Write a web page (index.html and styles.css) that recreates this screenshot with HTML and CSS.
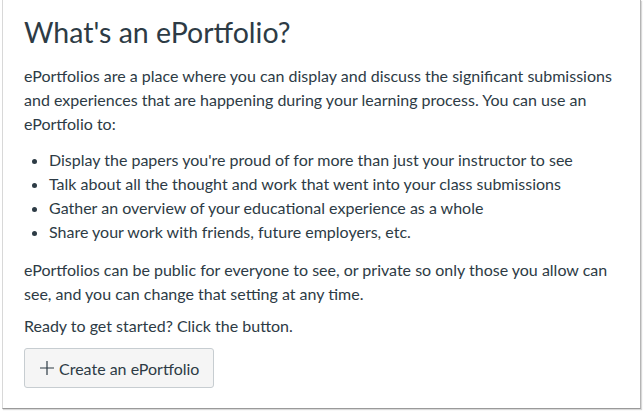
FILE: index.html
```html
<!DOCTYPE html>
<html lang="en">
<head>
    <meta charset="UTF-8">
    <title>ePortfolios</title>
    <link rel="stylesheet" href="styles.css">
</head>
<body>
    <div class="window">
        <h1>What's an ePortfolio?</h1>

        <p>ePortfolios are a place where you can display and discuss the significant submissions and experiences that are happening during your learning process. You can use an ePortfolio to:</p>

        <ul class="uses">
            <li>Display the papers you're proud of for more than just your instructor to see</li>
            <li>Talk about all the thought and work that went into your class submissions</li>
            <li>Gather an overview of your educational experience as a whole</li>
            <li>Share your work with friends, future employers, etc.</li>
        </ul>

        <p class="privacy">ePortfolios can be public for everyone to see, or private so only those you allow can see, and you can change that setting at any time.</p>

        <p class="ready">Ready to get started? Click the button.</p>

        <button class="create">
            <svg class="plus" width="16" height="16" viewBox="0 0 16 16"><path d="M8 1v14M1 8h14" stroke="#2d3b45" stroke-width="1.2" fill="none"/></svg>
            Create an ePortfolio
        </button>
    </div>
</body>
</html>
```

FILE: styles.css
```css
body {
    margin: 0;
    background-color: #ffffff;
}

.window {
    margin: 0 2px 2px 2px;
    height: 409px;
    box-sizing: border-box;
    padding: 12px 22px 0 21px;
    border-left: 1px solid #d8d8d8;
    border-right: 1px solid #b5b5b5;
    border-bottom: 1px solid #9a9a9a;
    box-shadow: 1px 1px 1px rgba(0,0,0,0.15);
    font-family: Lato, "Open Sans", sans-serif;
    color: #2d3b45;
}

h1 {
    font-size: 28.5px;
    font-weight: 400;
    margin: 0 0 12px 0;
    line-height: 40px;
}

p {
    font-size: 16px;
    line-height: 24px;
    margin: 0 0 12px 0;
}

.privacy {
    margin-bottom: 8px;
}

.ready {
    margin-bottom: 10px;
}

.uses {
    font-size: 16px;
    line-height: 24px;
    margin: 0 0 14px 0;
    padding-left: 25px;
}

.create {
    display: flex;
    align-items: center;
    gap: 4px;
    font-family: Lato, "Open Sans", sans-serif;
    font-size: 16px;
    color: #2d3b45;
    background-color: #f5f5f5;
    border: 1px solid #c7cdd1;
    border-radius: 3px;
    padding: 8px 14px;
    height: 40px;
}
```
